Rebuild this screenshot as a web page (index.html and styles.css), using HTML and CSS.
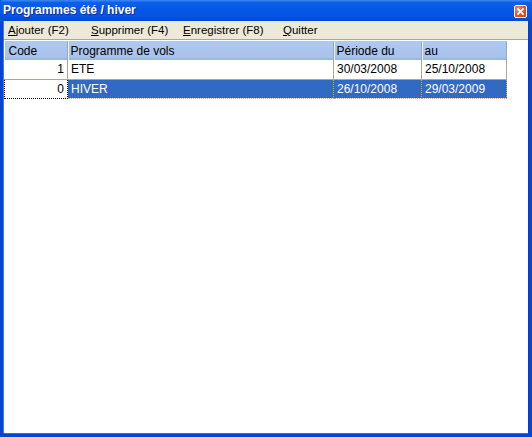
FILE: index.html
```html
<!DOCTYPE html>
<html>
<head>
<meta charset="utf-8">
<link rel="stylesheet" href="styles.css">
</head>
<body>
<div class="window">
  <div class="titlebar">
    <span class="title">Programmes été / hiver</span>
    <span class="close">
      <svg width="13" height="13" viewBox="0 0 13 13">
        <path d="M3.5 3.5 L9.5 9.5 M9.5 3.5 L3.5 9.5" stroke="#fff" stroke-width="2" stroke-linecap="square"/>
      </svg>
    </span>
  </div>
  <div class="frame">
    <div class="menubar">
      <span class="mi m1"><u>A</u>jouter (F2)</span>
      <span class="mi m2"><u>S</u>upprimer (F4)</span>
      <span class="mi m3"><u>E</u>nregistrer (F8)</span>
      <span class="mi m4"><u>Q</u>uitter</span>
    </div>
    <div class="content">
      <table class="grid">
        <colgroup>
          <col class="c1"><col class="c2"><col class="c3"><col class="c4">
        </colgroup>
        <thead>
          <tr>
            <th>Code</th>
            <th>Programme de vols</th>
            <th>Période du</th>
            <th>au</th>
          </tr>
        </thead>
        <tbody>
          <tr>
            <td class="num">1</td>
            <td>ETE</td>
            <td>30/03/2008</td>
            <td>25/10/2008</td>
          </tr>
          <tr class="sel">
            <td class="num focus">0</td>
            <td>HIVER</td>
            <td>26/10/2008</td>
            <td>29/03/2009</td>
          </tr>
        </tbody>
      </table>
    </div>
  </div>
</div>
</body>
</html>
```
FILE: styles.css
```css
html, body {
  margin: 0;
  padding: 0;
  background: #ffffff;
}
body {
  font-family: "Liberation Sans", Arial, sans-serif;
  font-size: 11px;
}
.window {
  width: 532px;
  height: 437px;
  display: flex;
  flex-direction: column;
  box-sizing: border-box;
  background: #0844d4;
}
.titlebar {
  height: 21px;
  flex: none;
  display: flex;
  align-items: center;
  justify-content: space-between;
  padding: 0 5px 0 3px;
  background: linear-gradient(#3c8cf5 0%, #0c5fe6 12%, #0557e8 45%, #0554e3 75%, #0447d0 100%);
  border-radius: 3px 3px 0 0;
}
.title {
  color: #ffffff;
  font-family: "Liberation Sans", Arial, sans-serif;
  font-weight: bold;
  font-size: 12px;
  line-height: 21px;
  text-shadow: 1px 1px 0 #0a2f9c;
}
.close {
  width: 13px;
  height: 13px;
  box-sizing: border-box;
  border: 1px solid #ffffff;
  border-radius: 2px;
  background: radial-gradient(circle at 30% 30%, #f0906a 0%, #e05a30 45%, #c8401a 100%);
  display: flex;
  align-items: center;
  justify-content: center;
  margin-top: 1px;
}
.close svg { width: 11px; height: 11px; }
.frame {
  flex: 1;
  display: flex;
  flex-direction: column;
  margin: 0 4px 4px 4px;
  box-shadow: -1px 0 0 #3a7bf0, 1px 0 0 #0a3bb8, 0 1px 0 #2f6de8;
  background: #ffffff;
}
.menubar {
  height: 18px;
  flex: none;
  display: flex;
  align-items: center;
  background: #ece9d8;
  color: #000000;
  border-bottom: 1px solid #aca899;
  padding-left: 4px;
}
.mi {
  white-space: nowrap;
  line-height: 18px;
  font-size: 11.5px;
}
.m1 { width: 83px; }
.m2 { width: 92px; }
.m3 { width: 100px; }
.m4 { width: 40px; }
.mi u { text-decoration: underline; text-underline-offset: 1px; }
.content {
  flex: 1;
  background: #ffffff;
  padding-top: 1px;
}
.grid {
  border-collapse: collapse;
  table-layout: fixed;
  width: 502px;
  font-size: 12px;
}
.c1 { width: 63px; }
.c2 { width: 266px; }
.c3 { width: 88px; }
.c4 { width: 85px; }
.grid th {
  height: 19px;
  padding: 0 3px;
  text-align: left;
  font-weight: normal;
  color: #000000;
  background: linear-gradient(#aec8ee 0%, #a9c4ec 80%, #9ab6e0 100%);
  box-shadow: inset 1px 0 0 #e8f0fc, inset -1px 0 0 #8eaad8;
  box-sizing: border-box;
}
.grid th:first-child { padding-left: 4px; box-shadow: inset -1px 0 0 #8eaad8; }
.grid td {
  height: 19px;
  padding: 0 3px;
  border: 1px solid #aca899;
  border-top: none;
  white-space: nowrap;
  box-sizing: border-box;
  color: #000000;
}
.grid td:first-child { border-left: none; }
.grid td.num { text-align: right; }
.grid tr.sel td {
  background: #316ac5;
  color: #ffffff;
  border: 1px dotted #c0a878;
  border-top: none;
}
.grid tr.sel td.focus {
  background: #ffffff;
  color: #000000;
  border: 1px dotted #000000;
}
```
